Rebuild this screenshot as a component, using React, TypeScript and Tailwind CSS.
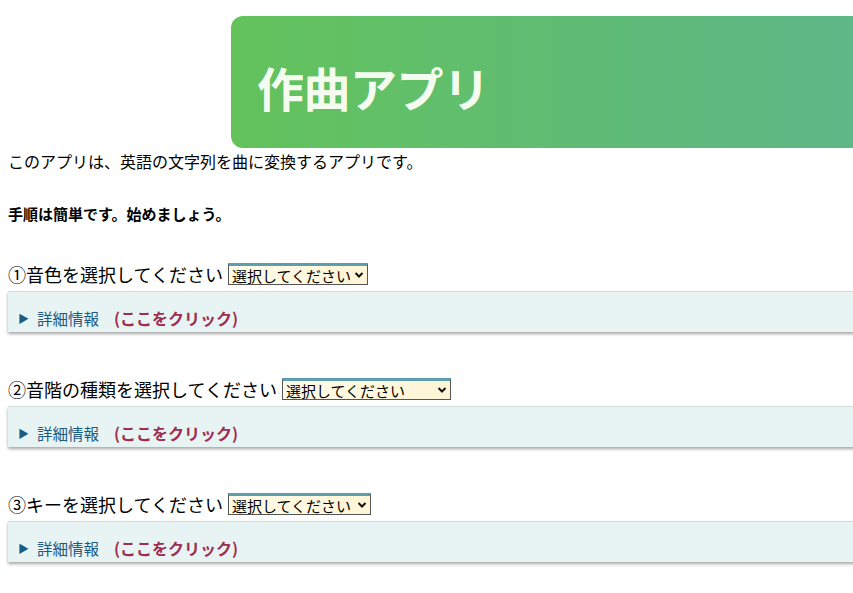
import React from "react";

const jp = { fontFamily: '"Noto Sans CJK JP", "Noto Sans", sans-serif' };

function Step({ label, selectW, first }: { label: string; selectW: string; first?: boolean }) {
  return (
    <div className={first ? "" : "mt-[45px]"}>
      <div className="flex items-center h-[24px] text-[18px] text-black leading-none">
        <span>{label}</span>
        <span className={`ml-[5px] relative h-[22px] ${selectW} border border-[#555] border-t-[3px] border-t-[#5b9fae] bg-gradient-to-r from-[#fffbe8] to-[#fff5d6] flex items-center text-[15px] pl-[3px]`}>
          選択してください
          <svg className="absolute right-[3px] top-[5px]" width="10" height="8" viewBox="0 0 10 8">
            <path d="M1.5 2 L5 5.5 L8.5 2" stroke="#111" strokeWidth="2" fill="none" />
          </svg>
        </span>
      </div>
      <div className="mt-[5px] w-[900px] h-[41px] bg-[#e8f4f3] border-t border-[#d4dcdc] shadow-[0_2px_3px_rgba(0,0,0,0.35)] flex items-end pb-[2px] pl-[10px]">
        <span className="text-[#1c5a82] text-[11px] mr-[8px] mb-[4px]">▶</span>
        <span className="text-[#1c5a82] text-[15.5px]">詳細情報</span>
        <span className="ml-[15px] text-[#9e2d50] text-[16px] font-bold">(ここをクリック)</span>
      </div>
    </div>
  );
}

export default function App() {
  return (
    <div className="w-[853px] h-[593px] overflow-hidden bg-white relative" style={jp}>
      <div className="pt-[16px]">
        <div className="ml-[231px] w-[700px] h-[132px] rounded-[12px] bg-gradient-to-r from-[#63c25a] to-[#5db68c] flex items-center pl-[26px]">
          <h1 className="text-[47px] font-bold text-[#f3fcef] leading-none tracking-[-0.5px] mt-[9px]">作曲アプリ</h1>
        </div>
      </div>
      <p className="ml-[8px] mt-[1px] text-[16px] leading-[24px] text-black">このアプリは、英語の文字列を曲に変換するアプリです。</p>
      <p className="ml-[8px] mt-[31px] text-[15px] leading-[20px] font-bold text-black">手順は簡単です。始めましょう。</p>
      <div className="mt-[38px] ml-[8px]">
        <Step first label="①音色を選択してください" selectW="w-[140px]" />
        <Step label="②音階の種類を選択してください" selectW="w-[169px]" />
        <Step label="③キーを選択してください" selectW="w-[143px]" />
      </div>
    </div>
  );
}
